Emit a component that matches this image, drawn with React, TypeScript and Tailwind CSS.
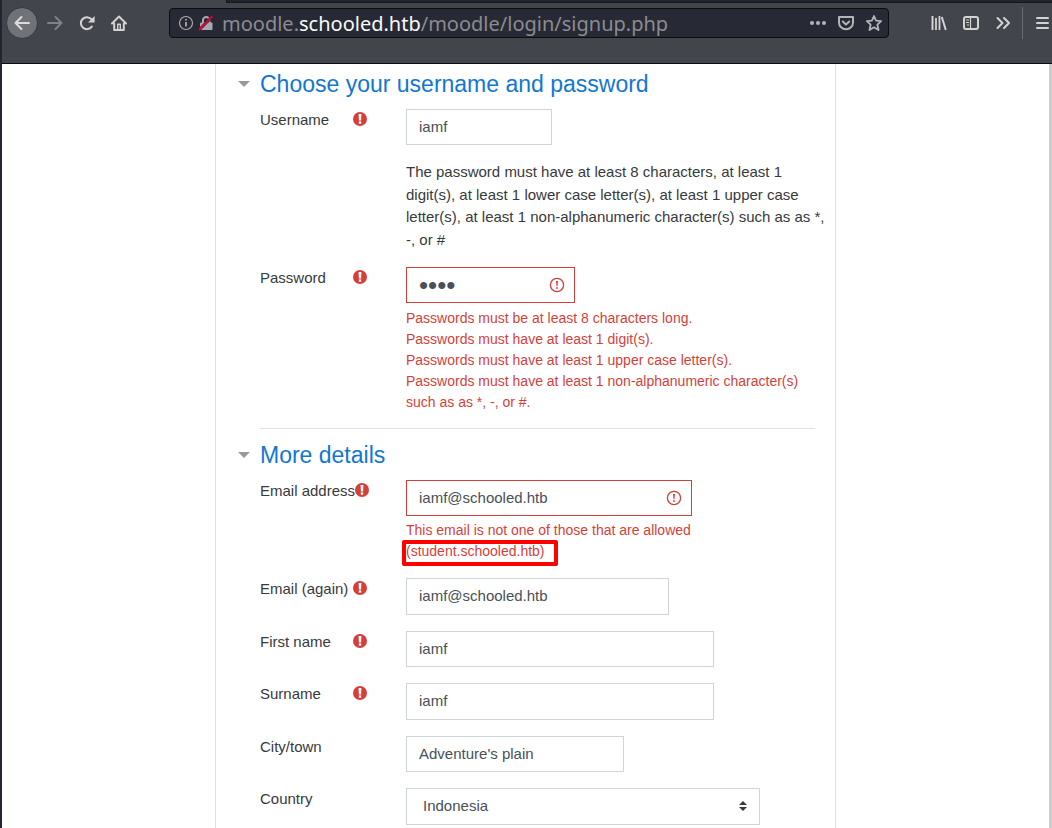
import { ReactNode } from "react";

function RequiredIcon() {
  return (
    <svg viewBox="0 0 14 14" className="h-3.5 w-3.5 shrink-0" role="img" aria-label="Required">
      <circle cx="7" cy="7" r="7" fill="#d43f3a" />
      <path d="M5.6 2h2.8L8.1 8.4H5.9z" fill="#fff" />
      <rect x="5.8" y="9.4" width="2.4" height="2.3" fill="#fff" />
    </svg>
  );
}

function InvalidIcon() {
  return (
    <svg
      viewBox="0 0 16 16"
      className="pointer-events-none absolute right-2.5 top-2.5 h-4 w-4"
      fill="none"
      stroke="#d43f3a"
      aria-hidden="true"
    >
      <circle cx="8" cy="8" r="6.6" strokeWidth="1.3" />
      <path d="M7 4h2L8.5 9.2h-1z" fill="#d43f3a" stroke="none" />
      <circle cx="8" cy="11" r="0.9" fill="#d43f3a" stroke="none" />
    </svg>
  );
}

function SectionHeading({ children }: { children: ReactNode }) {
  return (
    <h3 className="-ml-[23px] flex items-center gap-[9px] text-[23px] leading-normal text-[#1177d1]">
      <button type="button" aria-label="Collapse section" className="flex h-3.5 w-3.5 items-center justify-center">
        <svg viewBox="0 0 14 14" className="h-3.5 w-3.5" fill="#999">
          <path d="M1 4h12L7 10z" />
        </svg>
      </button>
      {children}
    </h3>
  );
}

type RowProps = { id: string; label: string; required?: boolean; children: ReactNode };

function Row({ id, label, required, children }: RowProps) {
  return (
    <div className="grid grid-cols-[146px_1fr]">
      <div className="flex items-start">
        <label htmlFor={id} className="min-w-[93px] whitespace-nowrap">
          {label}
        </label>
        {required && (
          <span className="flex h-5 items-center">
            <RequiredIcon />
          </span>
        )}
      </div>
      <div>{children}</div>
    </div>
  );
}

const field = "block border bg-white px-3 py-1.5 text-[#495057] outline-none";

export default function App() {
  return (
    <div className="flex min-h-screen flex-col border-l-2 border-[#23252e] bg-white font-['Liberation_Sans',Arial,sans-serif] text-[15px] leading-normal text-[#373a3c]">
      <header className="border-b border-[#0c0c0d] bg-[#42454c] text-[#d3d3d2]">
        <div className="ml-56 h-[3px] border-b border-l border-[#15171d] bg-[#23252e]" />
        <nav aria-label="Browser" className="flex h-[60px] items-start pt-1">
          <div className="flex h-8 items-center pl-1">
            <button aria-label="Back" className="flex h-8 w-8 items-center justify-center rounded-full border border-[#38393e] bg-[#717277]">
              <svg viewBox="0 0 16 16" className="h-4 w-4" fill="none" stroke="#dcdcda" strokeWidth="2" strokeLinecap="round" strokeLinejoin="round">
                <path d="M15 8H1.5M7.5 2L1.5 8l6 6" />
              </svg>
            </button>
            <button aria-label="Forward" className="ml-[9px] flex h-8 w-4 items-center justify-center">
              <svg viewBox="0 0 16 16" className="h-4 w-4" fill="none" stroke="#828387" strokeWidth="2" strokeLinecap="round" strokeLinejoin="round">
                <path d="M1 8h13.5M8.5 2l6 6-6 6" />
              </svg>
            </button>
            <button aria-label="Reload" className="ml-4 flex h-8 w-4 items-center justify-center">
              <svg viewBox="0 0 16 16" className="h-4 w-4" fill="none" stroke="currentColor" strokeWidth="2">
                <path d="M12.8 11.6A6 6 0 1 1 12.4 4.2" strokeLinecap="round" />
                <path d="M15.6 1v6.4H9z" fill="currentColor" stroke="none" />
              </svg>
            </button>
            <button aria-label="Home" className="ml-4 flex h-8 w-4 items-center justify-center">
              <svg viewBox="0 0 16 16" className="h-4 w-4" fill="none" stroke="currentColor" strokeWidth="2" strokeLinecap="round" strokeLinejoin="round">
                <path d="M1 8.5l7-7 7 7M3.2 8.5V15h9.6V8.5" />
                <path d="M6.7 15V9.2h2.6V15" strokeWidth="1.4" />
              </svg>
            </button>
          </div>
          <div className="ml-[42px] mt-px flex h-[30px] min-w-0 flex-1 items-center rounded border border-[#0c0c0d] bg-[#272935] pl-2 pr-1.5">
            <svg viewBox="0 0 16 16" className="h-4 w-4 shrink-0" fill="none" stroke="#a9a9ad" aria-hidden="true">
              <circle cx="8" cy="8" r="6.5" strokeWidth="1.2" />
              <path d="M8 7v4.5M8 4v1.6" strokeWidth="1.8" />
            </svg>
            <svg viewBox="0 0 16 16" className="ml-1 h-4 w-4 shrink-0" fill="none" aria-hidden="true">
              <rect x="2" y="7.5" width="12.5" height="7.5" rx="1" fill="#a9a9ad" />
              <path d="M5 8V5.2a3.2 3.2 0 0 1 6.4 0V8" stroke="#a9a9ad" strokeWidth="2" />
              <path d="M1 15L14.5 1.2" stroke="#272935" strokeWidth="3" />
              <path d="M1 15L14.5 1.2" stroke="#e6003a" strokeWidth="1.8" />
            </svg>
            <div className="ml-2 flex-1 truncate pt-0.5 font-['Noto_Sans',sans-serif] text-[20px] leading-[26px] text-[#8b8c91]">
              moodle.<span className="text-[#f9f9fa]">schooled.htb</span>/moodle/login/signup.php
            </div>
            <div className="flex items-center gap-3 text-[#b4b4b7]">
              <button aria-label="Page actions">
                <svg viewBox="0 0 16 16" className="h-4 w-4" fill="currentColor">
                  <circle cx="2" cy="8" r="2" />
                  <circle cx="8" cy="8" r="2" />
                  <circle cx="14" cy="8" r="2" />
                </svg>
              </button>
              <button aria-label="Save to Pocket">
                <svg viewBox="0 0 16 16" className="h-4 w-4" fill="none" stroke="currentColor" strokeWidth="2" strokeLinecap="round" strokeLinejoin="round">
                  <path d="M1 2h14v5.5a7 6.8 0 0 1-14 0z" />
                  <path d="M4.8 6.5L8 9.5l3.2-3" />
                </svg>
              </button>
              <button aria-label="Bookmark this page">
                <svg viewBox="0 0 16 16" className="h-4 w-4" fill="none" stroke="currentColor" strokeWidth="1.8" strokeLinejoin="round">
                  <path d="M8 1l2.1 4.7 5 .5-3.7 3.5 1.1 5.3L8 12.3 3.5 15l1.1-5.3L.9 6.2l5-.5z" />
                </svg>
              </button>
            </div>
          </div>
          <div className="ml-[42px] flex h-8 items-center">
            <button aria-label="Library" className="flex w-4">
              <svg viewBox="0 0 16 16" className="h-4 w-4" fill="none" stroke="currentColor" strokeWidth="2">
                <path d="M1.5 1v14" />
                <path d="M5 3v12M8.5 1v14" strokeWidth="1.8" />
                <path d="M10.8 2l4 13" />
              </svg>
            </button>
            <button aria-label="Sidebars" className="ml-4 flex w-4">
              <svg viewBox="0 0 16 16" className="h-4 w-4" fill="none" stroke="currentColor" strokeWidth="2">
                <rect x="1" y="2" width="14" height="12" rx="2" />
                <path d="M7.5 2v12" strokeWidth="1.2" />
                <path d="M3 5h3M3 7.5h3M4 10h2" strokeWidth="1.1" />
              </svg>
            </button>
            <button aria-label="More tools" className="ml-4 flex w-4">
              <svg viewBox="0 0 16 16" className="h-4 w-4" fill="none" stroke="currentColor" strokeWidth="2" strokeLinecap="round" strokeLinejoin="round">
                <path d="M2.5 3l5 5-5 5M9 3l5 5-5 5" />
              </svg>
            </button>
            <span className="ml-[11px] h-8 w-px bg-[#6b6d72]" />
            <button aria-label="Open menu" className="ml-3 mr-px flex w-4">
              <svg viewBox="0 0 16 16" className="h-4 w-4" fill="none" stroke="currentColor" strokeWidth="2" strokeLinecap="round">
                <path d="M2 3h11M2 8h11M2 13h11" />
              </svg>
            </button>
          </div>
        </nav>
      </header>

      <div className="flex flex-1 border-r-3 border-[#cdcdcd]">
        <main className="mx-auto w-full max-w-[621px] border-x border-[#dee2e6] pl-11 pr-5">
          <form>
            <section className="border-b border-[#dee2e6] pb-[15px] pt-[3px]">
              <SectionHeading>Choose your username and password</SectionHeading>
              <div className="mt-[7px] flex flex-col gap-4">
                <Row id="username" label="Username" required>
                  <input id="username" defaultValue="iamf" className={`${field} w-[146px] border-[#ced4da] leading-normal`} />
                </Row>
                <div className="-mr-3 pl-[146px]">
                  The password must have at least 8 characters, at least 1 digit(s), at least 1 lower case letter(s), at
                  least 1 upper case letter(s), at least 1 non-alphanumeric character(s) such as as *, -, or #
                </div>
                <Row id="password" label="Password" required>
                  <div className="relative w-[169px]">
                    <input
                      id="password"
                      type="password"
                      defaultValue="iamf"
                      className={`${field} h-9 w-full border-[#d43f3a] text-[26px] leading-[22px]`}
                    />
                    <InvalidIcon />
                  </div>
                  <div className="mt-[5px] text-sm leading-normal text-[#d43f3a]">
                    <p>Passwords must be at least 8 characters long.</p>
                    <p>Passwords must have at least 1 digit(s).</p>
                    <p>Passwords must have at least 1 upper case letter(s).</p>
                    <p>Passwords must have at least 1 non-alphanumeric character(s) such as as *, -, or #.</p>
                  </div>
                </Row>
              </div>
            </section>

            <section className="pb-1 pt-[9px]">
              <SectionHeading>More details</SectionHeading>
              <div className="mt-[7px] flex flex-col gap-4">
                <Row id="email" label="Email address" required>
                  <div className="relative w-[286px]">
                    <input id="email" type="email" defaultValue="iamf@schooled.htb" className={`${field} w-full border-[#d43f3a] leading-normal`} />
                    <InvalidIcon />
                  </div>
                  <p className="mt-1 max-w-[330px] text-sm leading-normal text-[#d43f3a]">
                    This email is not one of those that are allowed{" "}
                    <span className="relative inline-block">
                      (student.schooled.htb)
                      <span className="absolute -bottom-1 -left-1 -right-[13px] -top-px rounded-xs border-4 border-[#ff0000]" />
                    </span>
                  </p>
                </Row>
                <Row id="email2" label="Email (again)" required>
                  <input id="email2" type="email" defaultValue="iamf@schooled.htb" className={`${field} w-[263px] border-[#ced4da] leading-normal`} />
                </Row>
                <Row id="firstname" label="First name" required>
                  <input id="firstname" defaultValue="iamf" className={`${field} w-[308px] border-[#ced4da] leading-normal`} />
                </Row>
                <Row id="surname" label="Surname" required>
                  <input id="surname" defaultValue="iamf" className={`${field} w-[308px] border-[#ced4da] leading-normal`} />
                </Row>
                <Row id="city" label="City/town">
                  <input id="city" defaultValue="Adventure's plain" className={`${field} w-[218px] border-[#ced4da] leading-normal`} />
                </Row>
                <Row id="country" label="Country">
                  <div className="relative w-[354px]">
                    <select
                      id="country"
                      defaultValue="Indonesia"
                      className="block w-full appearance-none border border-[#ced4da] bg-white px-4 py-1.5 leading-normal text-[#495057] outline-none"
                    >
                      <option>Indonesia</option>
                    </select>
                    <svg viewBox="0 0 8 10" className="pointer-events-none absolute right-[13px] top-[13px] h-2.5 w-2" fill="#343a40" aria-hidden="true">
                      <path d="M4 0l4 4H0zM4 10L0 6h8z" />
                    </svg>
                  </div>
                </Row>
              </div>
            </section>
          </form>
        </main>
      </div>
    </div>
  );
}
